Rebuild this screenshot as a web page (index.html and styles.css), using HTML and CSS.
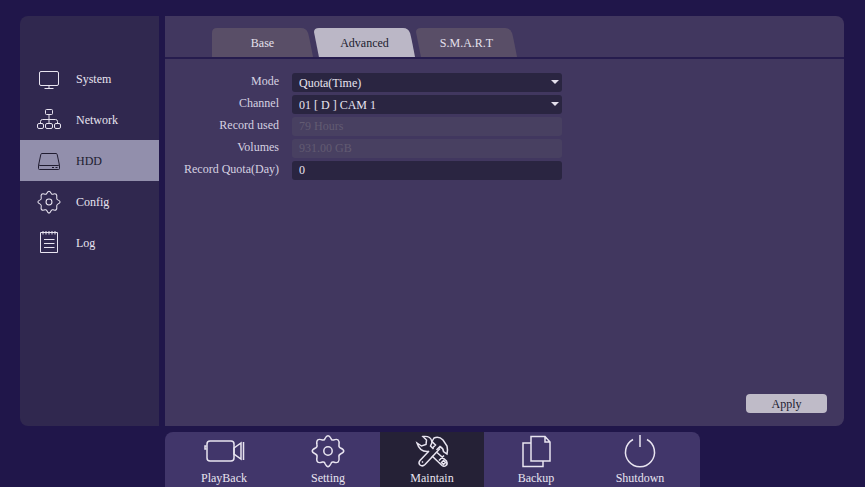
FILE: index.html
```html
<!DOCTYPE html>
<html lang="en">
<head>
<meta charset="utf-8">
<title>HDD - Advanced</title>
<link rel="stylesheet" href="styles.css">
</head>
<body>
<svg class="defs" aria-hidden="true">
  <symbol id="gear" viewBox="0 0 34 34">
    <path d="M14 4.500Q17-1 20 4.500Q20.500 6.500 22.500 6Q29 3.500 28 11Q27.500 13 29.500 14Q36 17 29.500 20Q27.500 21 28 23Q29 30.500 22.500 28Q20.500 27.500 20 29.500Q17 36 14 29.500Q13.500 27.500 11.500 28Q4.500 30.500 6 23Q6.500 21 4.500 20Q-2 17 4.500 14Q6.500 13 6 11Q4.500 3.500 11.500 6Q13.500 6.500 14 4.500Z"/>
    <circle cx="17" cy="17" r="4.200"/>
  </symbol>
</svg>
<div class="workspace">
  <nav class="sidebar" aria-label="Maintenance">
    <a class="side-item" href="#system">
      <svg class="side-icon" viewBox="0 0 26 26"><rect x="3.500" y="5.500" width="19" height="14" rx="1.500"/><path d="M13 19.500V22.500M8.500 22.500H17.500"/></svg>
      System</a>
    <a class="side-item" href="#network">
      <svg class="side-icon" viewBox="0 0 26 26"><rect x="9.500" y="2.500" width="7" height="5" rx="1"/><path d="M13 7.500V16.500M4.500 16.500V14.500Q4.500 12.500 6.500 12.500H19.500Q21.500 12.500 21.500 14.500V16.500"/><rect x="1.500" y="16.500" width="6" height="5" rx="1.500"/><rect x="9.500" y="16.500" width="7" height="5" rx="1.500"/><rect x="18.500" y="16.500" width="6" height="5" rx="1.500"/></svg>
      Network</a>
    <a class="side-item active" href="#hdd" aria-current="page">
      <svg class="side-icon" viewBox="0 0 26 26"><path d="M6 5.500H20Q21 5.500 21.200 6.500L23.500 17.500V20.500Q23.500 21.500 22.500 21.500H3.500Q2.500 21.500 2.500 20.500V17.500L4.800 6.500Q5 5.500 6 5.500ZM2.500 17.500Q3 17 4 17.500H22Q23 17 23.500 17.500M16 19.500H18M19.500 19.500H21.500"/></svg>
      HDD</a>
    <a class="side-item" href="#config">
      <svg class="side-icon heavy" viewBox="0 0 26 26"><use href="#gear" x="1" y="1" width="24" height="24"/></svg>
      Config</a>
    <a class="side-item" href="#log">
      <svg class="side-icon" viewBox="0 0 26 26"><path d="M4.500 2.500H21.500V22.500H4.500ZM8 9.500H18.500M8 13.500H18.500M8 17.500H18.500M7 1V4.500M10 1V4.500M13 1V4.500M16 1V4.500M19 1V4.500"/></svg>
      Log</a>
  </nav>
  <main class="panel">
    <div class="tabs" role="tablist">
      <button class="tab" type="button" role="tab" aria-selected="false">
        <svg class="tab-shape" viewBox="0 0 102 29" preserveAspectRatio="none"><path d="M0 29V5Q0 0 5 0H90Q95 0 97 5Q98 8 102 29Z"/></svg>
        <span>Base</span></button>
      <button class="tab" type="button" role="tab" aria-selected="true">
        <svg class="tab-shape" viewBox="0 0 102 29" preserveAspectRatio="none"><path d="M5 29L0 4Q0 0 5 0H90Q95 0 97 5Q98 8 102 29Z"/></svg>
        <span>Advanced</span></button>
      <button class="tab" type="button" role="tab" aria-selected="false">
        <svg class="tab-shape" viewBox="0 0 102 29" preserveAspectRatio="none"><path d="M5 29L0 4Q0 0 5 0H90Q95 0 97 5Q98 8 102 29Z"/></svg>
        <span>S.M.A.R.T</span></button>
    </div>
    <form class="settings">
      <label for="mode">Mode</label>
      <div class="select-box"><select id="mode"><option>Quota(Time)</option></select></div>
      <label for="channel">Channel</label>
      <div class="select-box"><select id="channel"><option>01 [ D ] CAM 1</option></select></div>
      <label for="used">Record used</label>
      <input id="used" type="text" value="79 Hours" disabled>
      <label for="volumes">Volumes</label>
      <input id="volumes" type="text" value="931.00 GB" disabled>
      <label for="quota">Record Quota(Day)</label>
      <input id="quota" type="text" value="0">
      <button class="apply" type="button">Apply</button>
    </form>
  </main>
</div>
<nav class="dock" aria-label="Main menu">
  <a class="dock-item first" href="#playback">
    <svg class="dock-icon wide" viewBox="0 0 42 34"><rect x="4" y="7" width="27" height="20" rx="3"/><path d="M3.500 12H2V15H3.500M31 14L38 9V25L31 20ZM40.500 8V26"/></svg>
    PlayBack</a>
  <a class="dock-item" href="#setting">
    <svg class="dock-icon" viewBox="0 0 34 34"><use href="#gear"/></svg>
    Setting</a>
  <a class="dock-item active" href="#maintain" aria-current="page">
    <svg class="dock-icon" viewBox="0 0 34 34">
      <path d="M14 17L5 26.500Q3 29 5 31Q7.500 33 10 30.500L25 14.500"/>
      <path d="M17.500 14L20.500 11L17 7.500L19 4Q24 2 28 6L32 12Q33 16 32 20L28.500 17.500Q28.500 14.500 25 12.500L21.500 16"/>
      <path d="M13.500 17.500Q5 18.500 2 9L6.500 12L11 10.500L11.500 6L8 2.500Q16.500 1.500 17 8.500L15.500 12L18.500 15M22 18.500L31.500 27Q33 30 31 31.500Q29 33 27 31.500L17 22M24 26.500L29 21.500M26.500 28.500L28.500 26.500L30.500 28.500L28.500 30.500ZM7 28.500L8 27.500"/>
    </svg>
    Maintain</a>
  <a class="dock-item" href="#backup">
    <svg class="dock-icon" viewBox="0 0 34 34"><path d="M12 9H4V32.500H24V27M12 2.500H26L31 8V27H12ZM26 2.500V8H31"/></svg>
    Backup</a>
  <a class="dock-item" href="#shutdown">
    <svg class="dock-icon" viewBox="0 0 34 34"><path d="M10 5.500A14.500 14.500 0 1 0 24 5.500M17 1V13"/></svg>
    Shutdown</a>
</nav>
</body>
</html>
```

FILE: styles.css
```css
* { box-sizing: border-box; }

body {
  margin: 0;
  min-height: 100vh;
  padding: 16px 21px 0 20px;
  display: flex;
  flex-direction: column;
  gap: 6px;
  background: #20164a;
  color: #e8e4f0;
  font: 12px/16px "Liberation Serif", serif;
}

button, input, select { font: inherit; color: inherit; border: 0; }
a { color: inherit; text-decoration: none; }
svg { fill: none; stroke: currentColor; }
.defs { position: absolute; width: 0; height: 0; }

.workspace { flex: 1; display: flex; gap: 6px; }

.sidebar {
  flex: 0 0 139px;
  padding-top: 42px;
  background: #30284f;
  border-radius: 8px 0 0 8px;
}
.side-item {
  display: flex;
  align-items: center;
  gap: 14px;
  height: 41px;
  padding-left: 16px;
}
.side-item.active { background: #928fac; color: #201c30; }
.side-icon { width: 26px; height: 26px; }
.side-icon.heavy { stroke-width: 1.5; }

.panel {
  flex: 1;
  display: flex;
  flex-direction: column;
  background: #41375f;
  border-radius: 0 8px 8px 0;
}
.tabs {
  display: flex;
  gap: 1px;
  padding: 12px 0 0 47px;
  border-bottom: 2px solid #261c4e;
}
.tab {
  position: relative;
  width: 101px;
  height: 29px;
  padding: 0;
  background: none;
  color: #e4e0ec;
}
.tab[aria-selected="true"] { color: #201c30; }
.tab span { position: relative; }
.tab-shape {
  position: absolute;
  inset: 0;
  width: 100%;
  height: 100%;
  fill: #594e67;
  stroke: none;
}
.tab[aria-selected="true"] .tab-shape { fill: #bbb7c6; }

.settings {
  flex: 1;
  display: grid;
  grid-template-columns: 114px 270px 1fr;
  grid-template-rows: repeat(5, 19px) 1fr;
  gap: 3px 13px;
  padding: 14px 17px 13px 0;
}
.settings label { grid-column: 1; text-align: right; color: #d6d1e1; }
.settings input,
.select-box { grid-column: 2; }
.settings input,
.settings select {
  width: 100%;
  height: 19px;
  margin: 0;
  padding: 0 7px;
  border-radius: 3px;
  background: #2a2541;
  appearance: none;
}
.settings input:disabled { background: #484061; color: #625b72; }
.select-box { position: relative; }
.select-box::after {
  content: "";
  position: absolute;
  right: 3px;
  top: 7px;
  border: solid transparent;
  border-width: 4px 4px 0;
  border-top-color: #e4e0ec;
  pointer-events: none;
}
.apply {
  grid-column: 3;
  grid-row: 6;
  justify-self: end;
  align-self: end;
  width: 81px;
  height: 19px;
  padding: 0;
  border-radius: 4px;
  background: #bfbbc8;
  color: #201c30;
}

.dock {
  align-self: flex-start;
  display: flex;
  margin-left: 145px;
  padding-right: 8px;
  height: 55px;
  background: #41366a;
  border-radius: 8px 8px 0 0;
}
.dock-item {
  display: flex;
  flex-direction: column;
  align-items: center;
  gap: 2px;
  width: 104px;
  padding-top: 2px;
}
.dock-item.first { width: 111px; padding-left: 7px; }
.dock-item.active { background: #252136; }
.dock-icon { width: 34px; height: 34px; stroke-width: 1.5; }
.dock-icon.wide { width: 42px; }
```
